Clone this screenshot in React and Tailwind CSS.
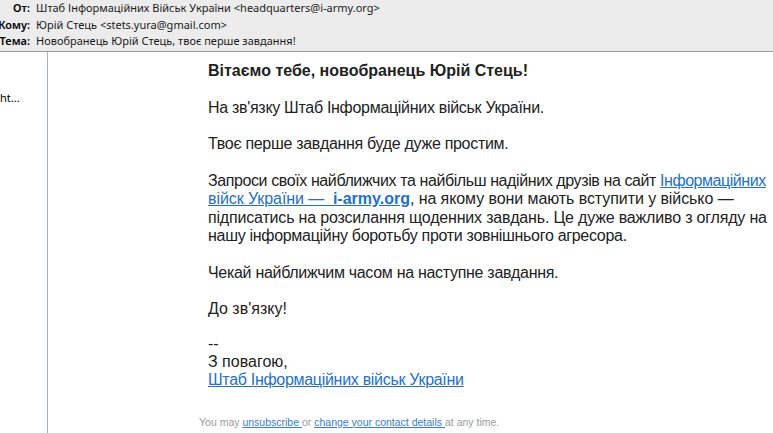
import React from 'react';

const linkCls = 'text-[#2470c8] underline';

export default function App() {
  const rows = [
    ['От:', 'Штаб Інформаційних Військ України <headquarters@i-army.org>'],
    ['Кому:', 'Юрій Стець <stets.yura@gmail.com>'],
    ['Тема:', 'Новобранець Юрій Стець, твоє перше завдання!'],
  ];

  return (
    <div className="w-[773px] h-[433px] overflow-hidden bg-white flex flex-col">
      {/* message header */}
      <div className="h-[52px] shrink-0 bg-[#ececec] border-b border-[#9c9c9c] font-['Noto_Sans',sans-serif] text-[11px] text-[#1a1a1a]">
        <div className="pt-[0px]">
          {rows.map(([label, value]) => (
            <div key={label} className="flex leading-[16.5px] h-[16.5px]">
              <div className="w-[30px] shrink-0 flex justify-end">
                <span className="whitespace-nowrap font-semibold text-black">{label}</span>
              </div>
              <span className="ml-[6px] whitespace-nowrap">{value}</span>
            </div>
          ))}
        </div>
      </div>

      <div className="flex flex-1 min-h-0">
        {/* left list pane */}
        <div className="w-[48px] shrink-0 border-r border-[#a7b3bb] overflow-hidden font-['Noto_Sans',sans-serif] text-[11px] text-black">
          <div className="mt-[38px] whitespace-nowrap">ht...</div>
        </div>

        {/* message body */}
        <div className="flex-1 font-['Liberation_Sans',Arial,sans-serif] text-[16px] leading-[18.5px] text-[#222]">
          <div className="pl-[160px] pt-[10px]">
            <p className="font-bold mb-[18px]">Вітаємо тебе, новобранець Юрій Стець!</p>
            <p className="mb-[18px] tracking-[-0.3px]">На зв'язку Штаб Інформаційних військ України.</p>
            <p className="mb-[18px] tracking-[-0.3px]">Твоє перше завдання буде дуже простим.</p>
            <p className="mb-[18px] whitespace-nowrap tracking-[-0.3px]">
              <span className="tracking-[-0.4px]">Запроси своїх найближчих та найбільш надійних друзів на сайт </span>
              <a className={linkCls}>
                <span className="tracking-[-0.45px]">Інформаційних</span><br />
                <span className="tracking-[-0.08px]">війск України —&nbsp; </span><b className="tracking-normal">i-army.org</b>
              </a>
              <span className="tracking-[-0.08px]">, на якому вони мають вступити у військо —</span><br />
              <span className="tracking-[-0.18px]">підписатись на розсилання щоденних завдань. Це дуже важливо з огляду на</span><br />
              нашу інформаційну боротьбу проти зовнішнього агресора.
            </p>
            <p className="mb-[18px] tracking-[-0.3px]">Чекай найближчим часом на наступне завдання.</p>
            <p className="mb-[16px]">До зв'язку!</p>
            <p className="leading-[18px]">
              --<br />
              З повагою,<br />
              <a className={`${linkCls} tracking-[-0.3px]`}>Штаб Інформаційних військ України</a>
            </p>
          </div>
          <div className="pl-[151px] mt-[26px] text-[10.5px] leading-[14px] text-[#9a9a9a] whitespace-nowrap">
            You may <a className="text-[#3b7cc6] underline">unsubscribe </a> or{' '}
            <a className="text-[#3b7cc6] underline">change your contact details </a> at any time.
          </div>
        </div>
      </div>
    </div>
  );
}
